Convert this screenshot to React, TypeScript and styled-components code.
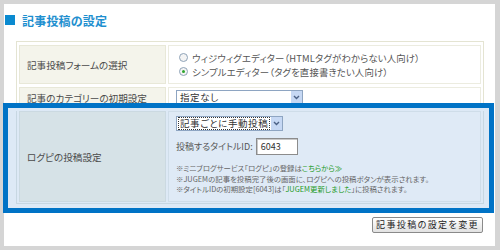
import React from 'react';
import styled, { createGlobalStyle } from 'styled-components';

const GlobalStyle = createGlobalStyle`
  html, body {
    margin: 0;
    padding: 0;
    background: #d5d5d5;
  }
  body {
    font-family: "Noto Sans CJK JP", "Noto Sans", sans-serif;
    font-feature-settings: "palt";
    color: #4a4a4a;
  }
`;

const Panel = styled.div`
  box-sizing: border-box;
  width: 491px;
  height: 242px;
  margin: 4px 0 0 4px;
  background: #fff;
  display: flex;
  flex-direction: column;
`;

const Heading = styled.h2`
  display: flex;
  align-items: center;
  gap: 7px;
  margin: 11px 0 0 1px;
  height: 10px;
  font-size: 12px;
  font-weight: 700;
  color: #1e8fcf;
  letter-spacing: 0.2px;
  &::before {
    content: '';
    width: 10px;
    height: 10px;
    background: #0a8ad0;
  }
`;

const Table = styled.div`
  margin: 16px 11px 0 12px;
  border: 1px solid #e4e4d2;
  border-bottom: none;
  padding: 3px 2px 0;
  display: grid;
  grid-template-columns: 147px 1fr;
  column-gap: 2px;
  row-gap: 3px;
`;

const Highlight = styled.div`
  position: relative;
  z-index: 1;
  margin: -5px 1px 0 -1px;
  border: 5px solid #0073c6;
  background: #dde9f6;
  padding: 3px 5px 4px 8px;
`;

const TableEnd = styled.div`
  border: 1px solid #c7d7e2;
  border-top: none;
  padding: 0 2px 1px;
  display: grid;
  grid-template-columns: 147px 1fr;
  column-gap: 2px;
`;

const Label = styled.div<{ $hi?: boolean; $h: number }>`
  box-sizing: border-box;
  height: ${p => p.$h}px;
  background: ${p => (p.$hi ? '#d6e2e7' : '#f4f4eb')};
  border: 1px solid ${p => (p.$hi ? '#cbd9e1' : '#e8e8d8')};
  display: flex;
  align-items: center;
  padding-left: 7px;
  font-size: 9.6px;
  color: #4a4a4a;
`;

const Value = styled.div<{ $hi?: boolean; $h: number }>`
  box-sizing: border-box;
  height: ${p => p.$h}px;
  background: ${p => (p.$hi ? '#dfeaf6' : '#fff')};
  border: 1px solid ${p => (p.$hi ? '#cfdde9' : '#ecece0')};
  padding-left: 7px;
  display: flex;
  flex-direction: column;
  align-items: flex-start;
  justify-content: ${p => (p.$hi ? 'flex-start' : 'center')};
  font-size: 9.4px;
`;

const RadioRow = styled.label`
  display: flex;
  align-items: center;
  gap: 4px;
  height: 14px;
  margin-left: 3px;
  color: #555;
  letter-spacing: 0.15px;
`;

const RadioDot = styled.span<{ $on?: boolean }>`
  box-sizing: border-box;
  width: 9px;
  height: 9px;
  border-radius: 50%;
  border: 1px solid #8fa3b8;
  background: #f4f4f4;
  display: flex;
  align-items: center;
  justify-content: center;
  &::after {
    content: '';
    width: 3px;
    height: 3px;
    border-radius: 50%;
    background: ${p => (p.$on ? '#2da52d' : 'transparent')};
  }
`;

const Select = styled.div<{ $w?: number; $top?: number }>`
  box-sizing: border-box;
  width: ${p => (p.$w ? `${p.$w}px` : 'auto')};
  height: 15px;
  margin-top: ${p => p.$top ?? 0}px;
  border: 1px solid #8ea5c2;
  background: #fff;
  display: flex;
  align-items: center;
  justify-content: space-between;
  gap: 2px;
  font-size: 9.5px;
  color: #333;
  letter-spacing: 0.6px;
  white-space: nowrap;
`;

const SelectText = styled.span<{ $focus?: boolean }>`
  margin-left: 2px;
  padding: 0 1px;
  line-height: 11px;
  outline: ${p => (p.$focus ? '1px dotted #333' : 'none')};
`;

const Arrow = styled.span`
  width: 11px;
  height: 13px;
  background: #c6d8f4;
  display: flex;
  align-items: center;
  justify-content: center;
`;

const IdRow = styled.div`
  display: flex;
  align-items: center;
  gap: 3px;
  margin-top: 7px;
  font-size: 9px;
  color: #555;
`;

const IdInput = styled.div`
  box-sizing: border-box;
  width: 42px;
  height: 17px;
  border: 1px solid #8c8c8c;
  box-shadow: inset 1px 1px 0 #c8c8c8;
  background: #fff;
  padding-left: 4px;
  display: flex;
  align-items: center;
  font-size: 9px;
  color: #333;
`;

const Notes = styled.div`
  margin-top: 8px;
  font-size: 7.4px;
  line-height: 10.5px;
  color: #666;
  white-space: nowrap;
`;

const Link = styled.span`
  color: #1e9a1e;
`;

const ButtonRow = styled.div`
  display: flex;
  justify-content: flex-end;
  margin: 4px 12px 0 0;
`;

const Button = styled.button`
  width: 111px;
  height: 16px;
  padding: 0;
  border: 1px solid #8a8a8a;
  border-radius: 2px;
  background: linear-gradient(#ffffff, #e2e2e2);
  font-family: inherit;
  font-feature-settings: "palt";
  font-size: 9px;
  letter-spacing: 1.4px;
  color: #222;
  line-height: 14px;
`;

const Chevron = () => (
  <svg width="7" height="5" viewBox="0 0 7 5">
    <path d="M1 1 L3.5 3.5 L6 1" fill="none" stroke="#4b6186" strokeWidth="1.4" />
  </svg>
);

const App: React.FC = () => (
  <>
    <GlobalStyle />
    <Panel>
      <Heading>記事投稿の設定</Heading>
      <Table>
        <Label $h={39}>記事投稿フォームの選択</Label>
        <Value $h={39}>
          <RadioRow>
            <RadioDot />
            ウィジウィグエディター（HTMLタグがわからない人向け）
          </RadioRow>
          <RadioRow>
            <RadioDot $on />
            シンプルエディター（タグを直接書きたい人向け）
          </RadioRow>
        </Value>
        <Label $h={21}>記事のカテゴリーの初期設定</Label>
        <Value $h={21}>
          <Select $w={127}>
            <SelectText>指定なし</SelectText>
            <Arrow>
              <Chevron />
            </Arrow>
          </Select>
        </Value>
      </Table>
      <Highlight>
        <TableEnd>
          <Label $hi $h={91}>ログピの投稿設定</Label>
          <Value $hi $h={91}>
            <Select $top={4}>
              <SelectText $focus>記事ごとに手動投稿</SelectText>
              <Arrow>
                <Chevron />
              </Arrow>
            </Select>
            <IdRow>
              投稿するタイトルID:
              <IdInput>6043</IdInput>
            </IdRow>
            <Notes>
              ※ミニブログサービス「ログピ」の登録は<Link>こちらから≫</Link>
              <br />
              ※JUGEMの記事を投稿完了後の画面に、ログピへの投稿ボタンが表示されます。
              <br />
              ※タイトルIDの初期設定[6043]は「<Link>JUGEM更新しました</Link>」に投稿されます。
            </Notes>
          </Value>
        </TableEnd>
      </Highlight>
      <ButtonRow>
        <Button>記事投稿の設定を変更</Button>
      </ButtonRow>
    </Panel>
  </>
);

export default App;
